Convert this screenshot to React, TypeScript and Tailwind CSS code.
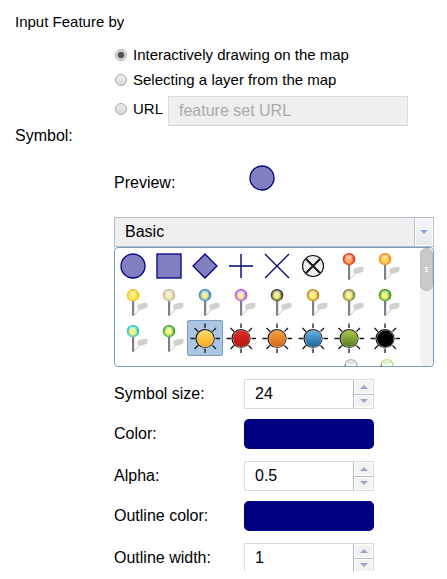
import React, { useState } from "react";

const NAVY = "#000080";
const SHAPE = { fill: "#8080c0", stroke: NAVY, strokeWidth: 1.3 };

type Glyph = { kind: string; name: string; a?: string; b?: string };

const glyphs: Glyph[] = [
  { kind: "circle", name: "Circle" },
  { kind: "square", name: "Square" },
  { kind: "diamond", name: "Diamond" },
  { kind: "cross", name: "Cross" },
  { kind: "x", name: "X" },
  { kind: "target", name: "Crossed circle" },
  { kind: "pin", name: "Red pin", a: "#ffb070", b: "#dc2500" },
  { kind: "pin", name: "Orange pin", a: "#ffdc64", b: "#f77a08" },
  { kind: "pin", name: "Yellow pin", a: "#ffee76", b: "#f2bd00" },
  { kind: "pin", name: "Beige pin", a: "#f6efbd", b: "#bdb38c" },
  { kind: "pin", name: "Blue pin", a: "#f2f08c", b: "#1673dc" },
  { kind: "pin", name: "Purple pin", a: "#fff0a0", b: "#a637e8" },
  { kind: "pin", name: "Black pin", a: "#f0f080", b: "#22261a" },
  { kind: "pin", name: "Gold pin", a: "#ffef85", b: "#b57b00" },
  { kind: "pin", name: "Olive pin", a: "#f6f38b", b: "#77752f" },
  { kind: "pin", name: "Green pin", a: "#f5f788", b: "#188500" },
  { kind: "pin", name: "Cyan pin", a: "#f4f58b", b: "#08bfcb" },
  { kind: "pin", name: "Leaf pin", a: "#f5f788", b: "#229a20" },
  { kind: "sun", name: "Yellow sun", a: "#ffdc68", b: "#f5a81e" },
  { kind: "sun", name: "Red sun", a: "#e02a24", b: "#b71517" },
  { kind: "sun", name: "Orange sun", a: "#f6a03c", b: "#d9671a" },
  { kind: "sun", name: "Blue sun", a: "#66b5e3", b: "#16629f" },
  { kind: "sun", name: "Green sun", a: "#a8c83e", b: "#577a2a" },
  { kind: "sun", name: "Black sun", a: "#000000", b: "#000000" },
  { kind: "none", name: "Marker 1" },
  { kind: "none", name: "Marker 2" },
  { kind: "none", name: "Marker 3" },
  { kind: "none", name: "Marker 4" },
  { kind: "none", name: "Marker 5" },
  { kind: "none", name: "Marker 6" },
  { kind: "ball", name: "Grey ball", a: "#ffffff", b: "#b9b9c4" },
  { kind: "ball", name: "Green ball", a: "#ffffff", b: "#b9e086" },
];

function Drawing({ glyph, id }: { glyph: Glyph; id: string }) {
  const { kind, a, b } = glyph;
  return (
    <svg viewBox="0 0 36 36" className="block size-9" aria-hidden="true">
      {kind === "circle" && <circle cx="18" cy="18" r="12" {...SHAPE} />}
      {kind === "square" && <rect x="6" y="6" width="24" height="24" {...SHAPE} />}
      {kind === "diamond" && <path d="M18 6 30 18 18 30 6 18Z" {...SHAPE} />}
      {kind === "cross" && <path d="M18 6V30M6 18H30" stroke={NAVY} strokeWidth="1.4" />}
      {kind === "x" && <path d="M6 6 30 30M30 6 6 30" stroke={NAVY} strokeWidth="1.3" />}
      {kind === "target" && (
        <g stroke="#161616" fill="none">
          <circle cx="18" cy="18" r="10.5" fill="#efefef" strokeWidth="1.2" />
          <path d="M11 11 25 25M25 11 11 25" strokeWidth="2" />
        </g>
      )}
      {kind === "pin" && (
        <>
          <radialGradient id={id} cx="48%" cy="54%" r="56%">
            <stop offset="0" stopColor={a} />
            <stop offset=".35" stopColor={a} />
            <stop offset=".9" stopColor={b} />
            <stop offset="1" stopColor={b} />
          </radialGradient>
          <path
            d="M19 31 23.500 25C21 23 22 20.500 26 19.500 29 18.700 32 18.500 32.500 19.500V23C30 25 27.500 25.500 25 25.500L19.500 31.500Z"
            fill="#d0d0cd"
          />
          <rect x="17" y="16" width="2.200" height="15.700" fill="#7b808d" />
          <circle cx="18" cy="11.200" r="6.200" fill={`url(#${id})`} />
          <ellipse cx="18" cy="8.200" rx="3.600" ry="2" fill="#fff" opacity=".4" />
        </>
      )}
      {kind === "sun" && (
        <>
          <linearGradient id={id} x1="0" y1="0" x2="0" y2="1">
            <stop offset="0" stopColor={a} />
            <stop offset="1" stopColor={b} />
          </linearGradient>
          <path
            d="M18 3.500V8M18 28.500V33M3.500 18.500H8M28.500 18.500H33M7.500 8 11 11.500M25.500 25.500 29 29M29 8 25.500 11.500M11 25.500 7.500 29"
            stroke="#161616"
            strokeWidth="1.300"
          />
          <circle cx="18" cy="18.500" r="9.600" fill="#111" />
          <circle cx="18.200" cy="18.700" r="8.700" fill="#f3e5c6" opacity=".75" />
          <circle cx="18.300" cy="18.800" r="8.200" fill={`url(#${id})`} />
        </>
      )}
      {kind === "ball" && (
        <>
          <circle cx="20" cy="9.500" r="6" fill={a} stroke={b} strokeWidth="1.200" />
          <ellipse cx="20" cy="6.500" rx="4" ry="2.200" fill={b} opacity=".4" />
          <path d="M14.500 8.500V12" stroke="#555" strokeWidth="1" />
          <path d="M25.500 8.500V12" stroke={b} strokeWidth="1.200" />
        </>
      )}
    </svg>
  );
}

const Arrow = ({ up = false }: { up?: boolean }) => (
  <svg viewBox="0 0 8 4" className="block h-1 w-2" aria-hidden="true">
    <path d={up ? "M0 4 4 0 8 4Z" : "M0 0H8L4 4Z"} fill="#93a8cc" />
  </svg>
);

const radioClass =
  "size-3 shrink-0 appearance-none rounded-full border border-[#a9a9a9] bg-linear-to-b from-[#eeeeee] to-[#d8d8d8] checked:bg-[radial-gradient(circle,#555_0_2px,#666_3px,#e8e8e8_4px)]";

function NumberRow({ id, label, initial, step }: { id: string; label: string; initial: number; step: number }) {
  const [value, setValue] = useState(String(initial));
  const change = (d: number) => setValue(String(Math.round((Number(value) + d) * 10) / 10));
  const button = "flex flex-1 items-center justify-center border border-white bg-[#f2f2f2]";
  return (
    <div className="flex h-[30px] shrink-0 items-center">
      <label htmlFor={id} className="w-[130px] shrink-0">{label}</label>
      <div className="flex h-[30px] w-[130px] border border-[#d8dcdf] bg-white">
        <input
          id={id}
          value={value}
          onChange={(e) => setValue(e.target.value)}
          className="min-w-0 flex-1 pl-2.5 outline-none"
        />
        <div className="flex w-5 flex-col divide-y divide-[#b5bcc7] border-l border-[#b5bcc7]">
          <div className="flex flex-1"><button type="button" aria-label={`Increase ${label}`} onClick={() => change(step)} className={button}><Arrow up /></button></div>
          <div className="flex flex-1"><button type="button" aria-label={`Decrease ${label}`} onClick={() => change(-step)} className={button}><Arrow /></button></div>
        </div>
      </div>
    </div>
  );
}

function ColorRow({ id, label }: { id: string; label: string }) {
  return (
    <div className="mt-2.5 mb-3 flex h-[30px] shrink-0 items-center">
      <label htmlFor={id} className="w-[130px] shrink-0">{label}</label>
      <button id={id} type="button" className="h-[30px] w-[130px] rounded-[5px] bg-[#000080]" />
    </div>
  );
}

export default function App() {
  const [source, setSource] = useState("draw");
  const [selected, setSelected] = useState(18);
  return (
    <main className="h-screen bg-white pb-2 font-['Liberation_Sans',Arial,sans-serif] text-base leading-5 text-black">
      <form className="flex h-full flex-col overflow-hidden pl-[15px]">
        <h2 className="mt-3 shrink-0 text-[15px] leading-5">Input Feature by</h2>
        <div className="mt-2.5 ml-[100px] flex shrink-0 flex-col">
          <label className="flex h-[25px] items-center gap-1.5 text-[15px]">
            <input type="radio" name="source" checked={source === "draw"} onChange={() => setSource("draw")} className={radioClass} />
            Interactively drawing on the map
          </label>
          <label className="flex h-[25px] items-center gap-1.5 text-[15px]">
            <input type="radio" name="source" checked={source === "layer"} onChange={() => setSource("layer")} className={radioClass} />
            Selecting a layer from the map
          </label>
          <div className="mt-1 flex h-[30px] items-center">
            <label className="flex w-[53px] items-center gap-1.5 pb-1 text-[15px] leading-5">
              <input type="radio" name="source" checked={source === "url"} onChange={() => setSource("url")} className={radioClass} />
              URL
            </label>
            <input
              aria-label="Feature set URL"
              placeholder="feature set URL"
              disabled={source !== "url"}
              className="h-[30px] w-60 border border-[#d8dcdf] bg-[#efefef] px-2.5 placeholder:text-[#aaaaaa]"
            />
          </div>
        </div>
        <h2 className="shrink-0">Symbol:</h2>
        <section className="mr-[13px] ml-[99px] flex shrink-0 flex-col">
          <div className="mt-3 flex h-[59px] items-start">
            <span className="w-[130px] pt-[15px]">Preview:</span>
            <div className="pt-0.5">
              <Drawing glyph={glyphs[0]} id="preview" />
            </div>
          </div>
          <div className="relative h-[30px]">
            <select
              aria-label="Symbol set"
              className="h-[30px] w-full appearance-none border border-[#b5bcc7] bg-[#efefef] px-2.5 outline-none"
            >
              <option>Basic</option>
            </select>
            <span className="pointer-events-none absolute inset-y-px right-px flex w-[19px] items-center justify-center border-l border-[#b5bcc7] bg-linear-to-b from-[#f4f5f6] to-[#e6eaed] shadow-[inset_0_0_0_1px_#fff]">
              <Arrow />
            </span>
          </div>
          <div className="flex h-[120px] justify-between overflow-hidden rounded-[4px] border border-[#759dc0]">
            <div role="listbox" aria-label="Symbols" className="grid auto-rows-[36px] grid-cols-[repeat(8,36px)]">
              {glyphs.map((g, i) => (
                <button
                  key={g.name}
                  type="button"
                  role="option"
                  aria-label={g.name}
                  aria-selected={i === selected}
                  onClick={() => setSelected(i)}
                  className="size-9 rounded-[3px] aria-selected:bg-[#abc6e3] aria-selected:shadow-[inset_0_0_0_1px_#759dc0]"
                >
                  <Drawing glyph={g} id={`glyph-${i}`} />
                </button>
              ))}
            </div>
            <div className="w-[13px] rounded-[6px] bg-[#f1f1f1]">
              <div className="flex h-[43px] flex-col items-center justify-center gap-px rounded-[6px] border border-[#bdbdbd] bg-[#c9c9c9]">
                <i className="h-px w-[3px] bg-white" />
                <i className="h-px w-[3px] bg-white" />
                <i className="h-px w-[3px] bg-white" />
              </div>
            </div>
          </div>
          <div className="mt-3 flex flex-col">
            <NumberRow id="size" label="Symbol size:" initial={24} step={1} />
            <ColorRow id="color" label="Color:" />
            <NumberRow id="alpha" label="Alpha:" initial={0.5} step={0.1} />
            <ColorRow id="outline-color" label="Outline color:" />
            <NumberRow id="outline-width" label="Outline width:" initial={1} step={1} />
          </div>
        </section>
      </form>
    </main>
  );
}
